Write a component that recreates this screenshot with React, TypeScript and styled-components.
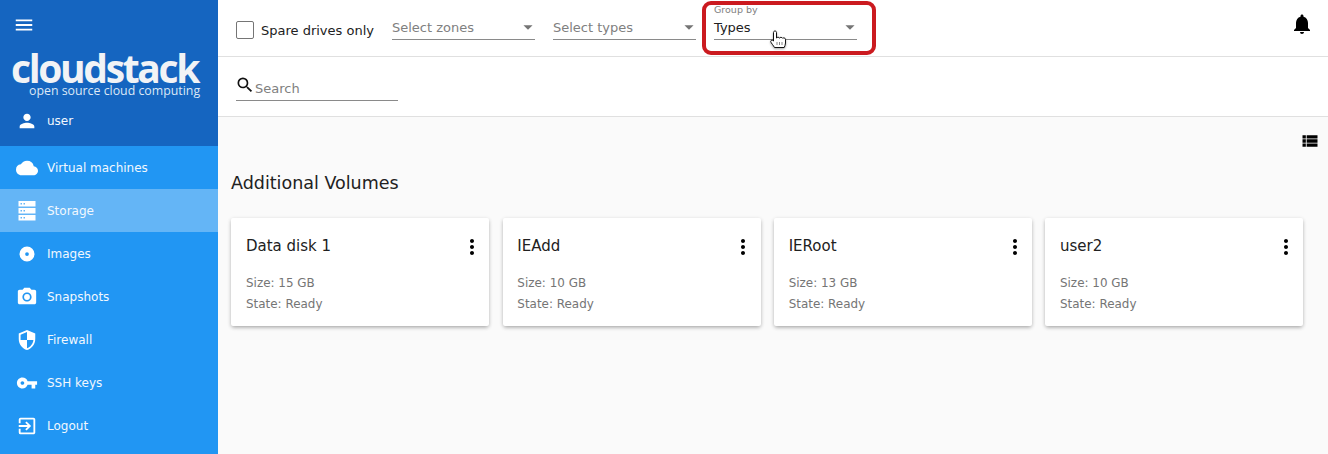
import React from "react";
import styled, { createGlobalStyle } from "styled-components";
import {
  MdMenu, MdPerson, MdCloud, MdPhotoCamera, MdSecurity, MdVpnKey,
  MdExitToApp, MdSearch, MdNotifications, MdViewList, MdMoreVert, MdArrowDropDown,
} from "react-icons/md";

const Global = createGlobalStyle`
  html, body { margin: 0; padding: 0; height: 100%; }
  body { font-family: "DejaVu Sans", sans-serif; overflow: hidden; background: #fafafa; }
  #root { height: 454px; }
`;
const Page = styled.div`display: flex; width: 1328px; height: 454px; position: relative; overflow: hidden;`;
const Sidebar = styled.aside`width: 218px; flex: none; background: #2196f3; color: #fff; display: flex; flex-direction: column;`;
const Brand = styled.div`height: 146px; background: #1565c0; display: flex; flex-direction: column; position: relative;`;
const MenuButton = styled.div`height: 50px; padding: 14px 0 0 13px; box-sizing: border-box; font-size: 22px; line-height: 0;`;
const Logo = styled.div`display: flex; flex-direction: column; align-items: flex-start; padding: 2px 0 0 11px; height: 48px; box-sizing: border-box;`;
const LogoName = styled.div`font-family: "Open Sans", sans-serif; font-weight: 700; font-size: 39px; line-height: 31px; letter-spacing: -2.35px; color: #f1f3f6;`;
const LogoTag = styled.div`font-family: "Open Sans", sans-serif; font-size: 12.35px; line-height: 14px; margin: 1px 0 0 18px; color: #dce8f6; white-space: nowrap;`;
const UserRow = styled.div`display: flex; align-items: center; height: 49px; margin-top: -2px;`;
const NavIcon = styled.span<{ $size?: number }>`width: 47px; flex: none; display: flex; justify-content: center; padding-left: 7px; box-sizing: border-box; font-size: ${(p) => p.$size ?? 24}px; line-height: 0; color: #fff;`;
const NavLabel = styled.span`font-size: 12px; color: #f2f8fe; white-space: nowrap;`;
const NavItem = styled.div<{ $active?: boolean }>`display: flex; align-items: center; height: 43px; background: ${(p) => (p.$active ? "#64b5f6" : "transparent")};`;
const Main = styled.main`flex: 1; min-width: 0; display: flex; flex-direction: column;`;
const TopBar = styled.div`height: 57px; box-sizing: border-box; background: #fff; border-bottom: 1px solid #e0e0e0; display: flex; align-items: flex-start; padding-left: 18px; position: relative;`;
const SpareLabel = styled.label`display: flex; align-items: center; gap: 7px; font-size: 13px; color: #212121; height: 20px; margin-top: 20px; width: 156px; flex: none; white-space: nowrap;`;
const CheckBox = styled.span`width: 16px; height: 16px; border: 1px solid #757575; border-radius: 2px; display: block; flex: none;`;
const Select = styled.div<{ $width: number; $labeled?: boolean }>`width: ${(p) => p.$width}px; height: 40px; margin-right: 18px; flex: none; border-bottom: 1px solid #8a8a8a; position: relative; box-sizing: border-box; display: flex; align-items: flex-end; padding-bottom: 4px; font-size: 13px; color: ${(p) => (p.$labeled ? "#212121" : "#808080")};`;
const SmallLabel = styled.span`position: absolute; left: 0; top: 4px; font-size: 9.5px; color: #808080;`;
const Caret = styled.span`position: absolute; right: -4px; bottom: 1px; font-size: 22px; line-height: 0; height: 22px; color: #757575;`;
const Bell = styled.span`position: absolute; right: 14px; top: 12px; font-size: 24px; line-height: 0; color: #000;`;
const SearchBar = styled.div`height: 60px; box-sizing: border-box; background: #fff; border-bottom: 1px solid #e0e0e0; padding: 18px 0 0 18px;`;
const SearchField = styled.div`width: 162px; height: 26px; box-sizing: border-box; border-bottom: 1px solid #8a8a8a; display: flex; align-items: flex-end; padding-bottom: 4px; position: relative; padding-left: 19px; font-size: 13px; color: #808080;`;
const SearchIcon = styled.span`position: absolute; left: -1px; top: 0; font-size: 20px; line-height: 0; color: #111;`;
const Content = styled.section`flex: 1; padding: 14px 25px 0 13.4px; background: #fafafa;`;
const ViewRow = styled.div`display: flex; justify-content: flex-end; margin-right: -17px; height: 22px; font-size: 20px; line-height: 0; color: #000;`;
const Heading = styled.h2`margin: 18px 0 0 -0.4px; font-weight: 400; font-size: 17.5px; line-height: 24px; color: #212121;`;
const Cards = styled.div`display: grid; grid-template-columns: repeat(4, 258px); column-gap: 13.33px; margin-top: 23px;`;
const Card = styled.article`height: 108px; box-sizing: border-box; background: #fff; border-radius: 2px; padding: 17px 14.6px; position: relative; box-shadow: 0 2px 4px -1px rgba(0,0,0,.3), 0 1px 4px rgba(0,0,0,.12);`;
const CardTitle = styled.div`font-size: 15px; line-height: 22px; color: #212121;`;
const CardMeta = styled.div`font-size: 11.95px; line-height: 21px; color: #757575;`;
const Meta = styled.div`margin-top: 16px;`;
const More = styled.span`position: absolute; right: 5.4px; top: 17px; font-size: 24px; line-height: 0; color: #000;`;
const Highlight = styled.div`position: absolute; left: 702px; top: 1px; width: 174px; height: 54px; box-sizing: border-box; border: 4px solid #cb1a1f; border-radius: 9px; pointer-events: none;`;
const Cursor = styled.svg`position: absolute; left: 770px; top: 30px; filter: drop-shadow(0 1px 1px rgba(0,0,0,.35));`;

const ServerIcon = () => (
  <svg width="1em" height="1em" viewBox="0 0 17 20" fill="currentColor">
    <path fillRule="evenodd" d="M0 0h17v5.5H0zM2 2v1.5h1.5V2zM5 2v1.5h1.5V2zM0 7h17v5.5H0zM2 9v1.5h1.5V9zM5 9v1.5h1.5V9zM0 14h17v5.5H0zM2 16v1.5h1.5V16zM5 16v1.5h1.5V16z" />
  </svg>
);
const DiscIcon = () => (
  <svg width="1em" height="1em" viewBox="0 0 24 24" fill="currentColor">
    <path fillRule="evenodd" d="M12 2a10 10 0 100 20 10 10 0 000-20zm0 7.5a2.5 2.5 0 110 5 2.5 2.5 0 010-5z" />
  </svg>
);

const nav = [
  { icon: <MdCloud />, size: 22, label: "Virtual machines" },
  { icon: <ServerIcon />, size: 20, label: "Storage", active: true },
  { icon: <DiscIcon />, size: 18, label: "Images" },
  { icon: <MdPhotoCamera />, size: 22, label: "Snapshots" },
  { icon: <MdSecurity />, size: 22, label: "Firewall" },
  { icon: <MdVpnKey />, size: 22, label: "SSH keys" },
  { icon: <MdExitToApp />, size: 22, label: "Logout" },
];
const volumes = [
  { name: "Data disk 1", size: 15 },
  { name: "IEAdd", size: 10 },
  { name: "IERoot", size: 13 },
  { name: "user2", size: 10 },
];

export default function App() {
  return (
    <Page>
      <Global />
      <Sidebar>
        <Brand>
          <MenuButton><MdMenu /></MenuButton>
          <Logo>
            <LogoName>cloudstack</LogoName>
            <LogoTag>open source cloud computing</LogoTag>
          </Logo>
          <UserRow>
            <NavIcon $size={22}><MdPerson /></NavIcon>
            <NavLabel>user</NavLabel>
          </UserRow>
        </Brand>
        {nav.map((n) => (
          <NavItem key={n.label} $active={n.active}>
            <NavIcon $size={n.size}>{n.icon}</NavIcon>
            <NavLabel>{n.label}</NavLabel>
          </NavItem>
        ))}
      </Sidebar>
      <Main>
        <TopBar>
          <SpareLabel><CheckBox />Spare drives only</SpareLabel>
          <Select $width={143}>Select zones<Caret><MdArrowDropDown /></Caret></Select>
          <Select $width={143}>Select types<Caret><MdArrowDropDown /></Caret></Select>
          <Select $width={143} $labeled><SmallLabel>Group by</SmallLabel>Types<Caret><MdArrowDropDown /></Caret></Select>
          <Bell><MdNotifications /></Bell>
        </TopBar>
        <SearchBar>
          <SearchField><SearchIcon><MdSearch /></SearchIcon>Search</SearchField>
        </SearchBar>
        <Content>
          <ViewRow><MdViewList /></ViewRow>
          <Heading>Additional Volumes</Heading>
          <Cards>
            {volumes.map((v) => (
              <Card key={v.name}>
                <CardTitle>{v.name}</CardTitle>
                <More><MdMoreVert /></More>
                <Meta>
                  <CardMeta>Size: {v.size} GB</CardMeta>
                  <CardMeta>State: Ready</CardMeta>
                </Meta>
              </Card>
            ))}
          </Cards>
        </Content>
      </Main>
      <Highlight />
      <Cursor width="17" height="19" viewBox="0 0 17 19">
        <path d="M3.5 2.5c0-2 3-2 3 0V8c.5-1 2.5-1 3 0 .5-.9 2.5-.9 3 .2.7-.6 2.8-.4 3 1V13c0 2-.8 3-1.3 4.5H4.5C3.5 15.5 1 13 .7 11.5c-.2-1 1.5-2 2.8-.5z" fill="#fff" stroke="#111" strokeWidth="1" strokeLinejoin="round" />
        <path d="M7 12v3M9.5 12v3M12 12v3" stroke="#666" strokeWidth=".8" />
      </Cursor>
    </Page>
  );
}
